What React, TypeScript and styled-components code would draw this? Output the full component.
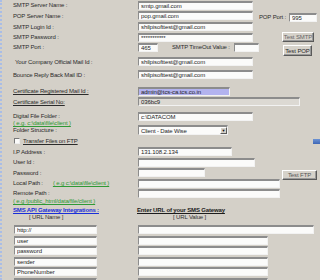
import React from 'react';
import styled, { createGlobalStyle } from 'styled-components';

const Global = createGlobalStyle`
  html, body { margin: 0; padding: 0; background: #d4d0c8; }
  body { width: 320px; height: 280px; overflow: hidden; }
`;

const Page = styled.div`
  position: relative;
  box-sizing: border-box;
  width: 320px;
  height: 280px;
  overflow: hidden;
  background: #d4d0c8;
  border-left: 2px dotted #a9bde6;
  font-family: "Liberation Sans", Arial, sans-serif;
  font-size: 6px;
  letter-spacing: -0.15px;
  color: #2b2b2b;
`;

const Section = styled.div<{ $mt?: number }>`
  display: flex;
  margin-top: ${p => p.$mt ?? 0}px;
`;

const LeftCol = styled.div`
  width: 251px;
  flex: none;
`;

const RightCol = styled.div<{ $pt?: number }>`
  display: flex;
  flex-direction: column;
  align-items: flex-start;
  padding-top: ${p => p.$pt ?? 0}px;
`;

const Row = styled.div<{ $h: number; $mt?: number }>`
  display: grid;
  grid-template-columns: 136px 1fr;
  align-items: center;
  height: ${p => p.$h}px;
  margin-top: ${p => p.$mt ?? 0}px;
`;

const Label = styled.div<{ $u?: boolean; $pl?: number }>`
  padding-left: ${p => p.$pl ?? 11}px;
  white-space: nowrap;
  line-height: 6px;
  text-decoration: ${p => (p.$u ? 'underline' : 'none')};
`;

const Note = styled.span<{ $ml?: number }>`
  color: #2f9a35;
  text-decoration: underline;
  margin-left: ${p => p.$ml ?? 0}px;
  white-space: nowrap;
`;

const NoteRow = styled.div<{ $h: number }>`
  height: ${p => p.$h}px;
  padding-left: 11px;
  line-height: ${p => p.$h}px;
  overflow: visible;
  display: flex;
  align-items: center;
`;

const Field = styled.input<{ $w: number; $bg?: string; $ml?: number }>`
  box-sizing: border-box;
  appearance: none;
  display: block;
  width: ${p => p.$w}px;
  height: 9px;
  margin: 0 0 0 ${p => p.$ml ?? 0}px;
  padding: 0 0 0 2px;
  background: ${p => p.$bg ?? '#fbfbfa'};
  border-style: solid;
  border-width: 2px 1px 1px 1px;
  border-color: #8c8c8c #f2f2f2 #f2f2f2 #8c8c8c;
  border-radius: 0;
  font-family: "Liberation Sans", Arial, sans-serif;
  font-size: 6px;
  letter-spacing: -0.1px;
  line-height: 6px;
  color: #1e1e1e;
  outline: none;
`;

const Inline = styled.div`
  display: flex;
  align-items: center;
`;

const InlineLabel = styled.span<{ $ml?: number }>`
  margin-left: ${p => p.$ml ?? 0}px;
  white-space: nowrap;
`;

const Button = styled.button<{ $w: number; $h: number; $mt?: number; $ml?: number; $c?: string }>`
  box-sizing: border-box;
  width: ${p => p.$w}px;
  height: ${p => p.$h}px;
  margin: ${p => p.$mt ?? 0}px 0 0 ${p => p.$ml ?? 0}px;
  padding: 0;
  background: #d6d2ca;
  border: 1px solid;
  border-color: #ffffff #5a5a5a #5a5a5a #ffffff;
  box-shadow: inset -1px -1px 0 #9a9a9a;
  font-family: "Liberation Sans", Arial, sans-serif;
  font-size: 6px;
  letter-spacing: -0.1px;
  color: ${p => p.$c ?? '#333'};
  white-space: nowrap;
`;

const PopRow = styled.div`
  display: flex;
  align-items: center;
  height: 10px;
  margin-top: 12px;
  padding-left: 6px;
  white-space: nowrap;
`;

const Select = styled.div<{ $w: number }>`
  box-sizing: border-box;
  width: ${p => p.$w}px;
  height: 10px;
  display: flex;
  align-items: center;
  justify-content: space-between;
  background: #fbfbfa;
  border-style: solid;
  border-width: 2px 1px 1px 1px;
  border-color: #8c8c8c #f2f2f2 #f2f2f2 #8c8c8c;
  padding-left: 2px;
  color: #1e1e1e;
`;

const SelectArrow = styled.span`
  box-sizing: border-box;
  width: 7px;
  height: 7px;
  display: flex;
  align-items: center;
  justify-content: center;
  background: #d6d2ca;
  border: 1px solid;
  border-color: #ffffff #5a5a5a #5a5a5a #ffffff;
  font-size: 4px;
  color: #111;
`;

const CheckRow = styled.div`
  display: flex;
  align-items: center;
  height: 8px;
  margin-top: 2px;
  padding-left: 12px;
`;

const CheckBox = styled.span`
  box-sizing: border-box;
  width: 6px;
  height: 6px;
  background: #fbfbfa;
  border-style: solid;
  border-width: 1px;
  border-color: #7a7a7a #eeeeee #eeeeee #7a7a7a;
`;

const CheckText = styled.span`
  margin-left: 3px;
  text-decoration: underline;
  white-space: nowrap;
`;

const Corner = styled.span`
  margin-left: auto;
  width: 7px;
  height: 5px;
  background: linear-gradient(#6d93d3, #3d66b6);
`;

const SmsHead = styled.div<{ $mt?: number; $h: number }>`
  display: grid;
  grid-template-columns: 135px 1fr;
  align-items: center;
  height: ${p => p.$h}px;
  margin-top: ${p => p.$mt ?? 0}px;
  line-height: 6px;
  white-space: nowrap;
`;

const HeadLink = styled.span`
  padding-left: 11px;
  color: #1b2fd8;
  font-weight: bold;
  text-decoration: underline;
`;

const HeadText = styled.span`
  font-weight: bold;
  text-decoration: underline;
  color: #1c1c1c;
`;

const SubHead = styled.span<{ $pl: number }>`
  padding-left: ${p => p.$pl}px;
  color: #333;
`;

const UrlList = styled.div`
  margin-top: 4px;
`;

const UrlRow = styled.div<{ $h: number }>`
  display: grid;
  grid-template-columns: 124px 1fr;
  align-items: center;
  height: ${p => p.$h}px;
  padding-left: 12px;
`;

const urlNames = ['http://', 'user', 'password', 'sender', 'PhoneNumber', ''];
const urlHeights = [11, 10, 11, 10, 11, 10];

export default function App() {
  return (
    <>
      <Global />
      <Page>
        <Section>
          <LeftCol>
            <Row $h={10}>
              <Label>SMTP Server Name :</Label>
              <Field $w={115} readOnly value="smtp.gmail.com" />
            </Row>
            <Row $h={11}>
              <Label>POP Server Name :</Label>
              <Field $w={115} readOnly value="pop.gmail.com" />
            </Row>
            <Row $h={11}>
              <Label>SMTP Login Id :</Label>
              <Field $w={115} readOnly value="shilpisofttest@gmail.com" />
            </Row>
            <Row $h={10}>
              <Label>SMTP Password :</Label>
              <Field $w={115} readOnly value="***********" />
            </Row>
            <Row $h={10}>
              <Label>SMTP Port :</Label>
              <Inline>
                <Field $w={20} readOnly value="465" />
                <InlineLabel $ml={14}>SMTP TimeOut Value :</InlineLabel>
                <Field $w={25} $ml={4} readOnly value="" />
              </Inline>
            </Row>
            <Row $h={11} $mt={4}>
              <Label $pl={13}>Your Company Official Mail Id :</Label>
              <Field $w={115} readOnly value="shilpisofttest@gmail.com" />
            </Row>
            <Row $h={11} $mt={2}>
              <Label>Bounce Reply Back Mail ID :</Label>
              <Field $w={115} readOnly value="shilpisofttest@gmail.com" />
            </Row>
          </LeftCol>
          <RightCol>
            <PopRow>
              POP Port :
              <Field $w={28} $ml={3} readOnly value="995" />
            </PopRow>
            <Button $w={32} $h={10} $mt={10} $ml={29} $c="#666">Test SMTP</Button>
            <Button $w={29} $h={11} $mt={3} $ml={30} $c="#2a2a2a">Test POP</Button>
          </RightCol>
        </Section>

        <Row $h={10} $mt={6}>
          <Label $u>Certificate Registered Mail Id :</Label>
          <Field $w={92} $bg="#b3b3ef" readOnly value="admin@tcs-ca.tcs.co.in" />
        </Row>
        <Row $h={11}>
          <Label $u>Certificate Serial No:</Label>
          <Field $w={162} $bg="#dcd9d3" readOnly value="036bc9" />
        </Row>
        <Row $h={10} $mt={4}>
          <Label>Digital File Folder :</Label>
          <Field $w={115} readOnly value="c:\DATACOM" />
        </Row>
        <NoteRow $h={4}>
          <Note>( e.g. c:\data\file\client )</Note>
        </NoteRow>
        <Row $h={10}>
          <Label>Folder Structure :</Label>
          <Select $w={90}>
            <span>Client - Date Wise</span>
            <SelectArrow>▼</SelectArrow>
          </Select>
        </Row>
        <CheckRow>
          <CheckBox />
          <CheckText>Transfer Files on FTP</CheckText>
          <Corner />
        </CheckRow>

        <Section $mt={1}>
          <LeftCol>
            <Row $h={11}>
              <Label>I.P Address :</Label>
              <Field $w={94} readOnly value="131.108.2.134" />
            </Row>
            <Row $h={10}>
              <Label>User Id :</Label>
              <Field $w={117} readOnly value="" />
            </Row>
            <Row $h={11}>
              <Label>Password :</Label>
              <Field $w={67} readOnly value="" />
            </Row>
            <Row $h={10}>
              <Label>
                Local Path :<Note $ml={10}>( e.g c:\data\file\client )</Note>
              </Label>
              <Field $w={142} readOnly value="" />
            </Row>
            <Row $h={10}>
              <Label>Remote Path :</Label>
              <Field $w={142} readOnly value="" />
            </Row>
          </LeftCol>
          <RightCol $pt={24}>
            <Button $w={35} $h={10} $ml={29} $c="#555">Test FTP</Button>
          </RightCol>
        </Section>
        <NoteRow $h={6}>
          <Note>( e.g /public_html/data/file/client )</Note>
        </NoteRow>

        <SmsHead $h={6} $mt={3}>
          <HeadLink>SMS API Gateway Integrations :</HeadLink>
          <HeadText>Enter URL of your SMS Gateway</HeadText>
        </SmsHead>
        <SmsHead $h={6} $mt={1}>
          <SubHead $pl={27}>[ URL Name ]</SubHead>
          <SubHead $pl={36}>[ URL Value ]</SubHead>
        </SmsHead>
        <UrlList>
          {urlNames.map((n, i) => (
            <UrlRow key={i} $h={urlHeights[i]}>
              <Field $w={83} readOnly value={n} />
              <Field $w={i === 0 ? 176 : 130} readOnly value="" />
            </UrlRow>
          ))}
        </UrlList>
      </Page>
    </>
  );
}
